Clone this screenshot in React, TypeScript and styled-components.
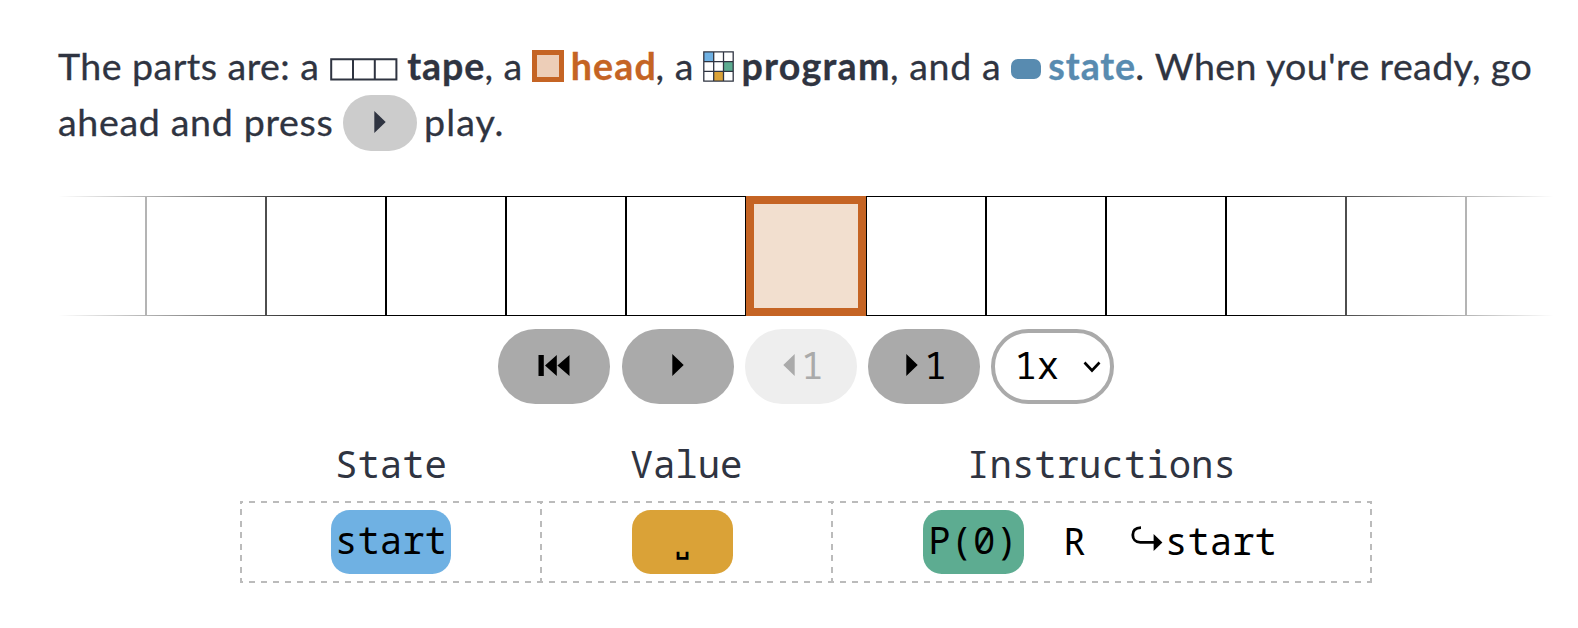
import React from 'react';
import styled, { createGlobalStyle } from 'styled-components';

const ink = '#2f3441';
const orange = '#c56424';
const sans = 'Lato, "Open Sans", sans-serif';
const mono = '"Noto Sans Mono", "Liberation Mono", monospace';

const GlobalStyle = createGlobalStyle`
  * { box-sizing: border-box; }
  body { margin: 0; background: #fff; }
`;

const Page = styled.main`
  width: 1578px;
  height: 628px;
  padding: 37px 24px 0 58px;
  overflow: hidden;
  background: #fff;
  color: ${ink};
`;

const Intro = styled.section`
  font-family: ${sans};
  font-size: 37.6px;
`;

const Line = styled.div`
  display: flex;
  height: 56px;
  line-height: 57px;
  white-space: pre;
`;

const Text = styled.span<{ $w: number; $ls?: number }>`
  flex: none;
  width: ${p => p.$w}px;
  letter-spacing: ${p => p.$ls ?? 0.5}px;
  -webkit-text-stroke: 0.3px currentColor;
`;

const Term = styled(Text)<{ $color?: string }>`
  font-weight: 700;
  color: ${p => p.$color ?? ink};
`;

const Glyph = styled.svg<{ $top: number; $gap?: number }>`
  flex: none;
  display: block;
  margin-top: ${p => p.$top}px;
  margin-right: ${p => p.$gap ?? 0}px;
`;

const HeadIcon = styled.span`
  flex: none;
  width: 32px;
  height: 32px;
  margin: 13px 6.8px 0 0;
  border: 5px solid ${orange};
  background: #edceb8;
`;

const StateIcon = styled.span`
  flex: none;
  width: 30px;
  height: 20px;
  margin: 22px 7.4px 0 0;
  border-radius: 7px;
  background: #588bb0;
`;

const InlinePlay = styled.span`
  flex: none;
  display: flex;
  align-items: center;
  justify-content: center;
  width: 74px;
  height: 56px;
  margin: 2px 7px 0 0;
  padding-bottom: 2px;
  border-radius: 28px;
  background: #ccc;
  color: ${ink};
`;

const Tape = styled.div`
  display: flex;
  justify-content: center;
  width: 1496px;
  height: 120px;
  margin-top: 47px;
  overflow: hidden;
  mask-image: linear-gradient(to right, transparent, #000 20%, #000 80%, transparent);
`;

const Cell = styled.div<{ $head?: boolean }>`
  flex: none;
  width: 120px;
  height: 120px;
  border: ${p => (p.$head ? `8px solid ${orange}` : '1px solid #000')};
  background: ${p => (p.$head ? '#f2dfcf' : 'transparent')};
`;

const Controls = styled.div`
  display: flex;
  gap: 11.25px;
  margin: 13px 0 0 440.4px;
  font-family: ${mono};
  font-size: 37.33px;
`;

const Button = styled.button`
  display: flex;
  align-items: center;
  justify-content: center;
  width: 112px;
  height: 75px;
  padding: 0 0 3px;
  border: 0;
  border-radius: 37.33px;
  background: #aaa;
  color: #000;
  font: inherit;
  line-height: 70px;
  &:disabled {
    background: #eee;
    color: #aaa;
  }
`;

const IconSlot = styled.span`
  display: flex;
  align-items: center;
  justify-content: center;
  width: 22.4px;
  padding-right: 1px;
`;

const Speed = styled.div`
  display: flex;
  align-items: center;
  gap: 24px;
  width: 123px;
  height: 75px;
  padding: 0 0 3px 19px;
  border: 4px solid #aaa;
  border-radius: 37.33px;
  color: #000;
  line-height: 60px;

  svg {
    margin-top: 4px;
  }
`;

const Program = styled.table`
  width: 1130px;
  margin: 21px 0 0 183px;
  border-spacing: 0;
  table-layout: fixed;
  font-family: ${mono};
  font-size: 37.33px;
`;

const HeadCell = styled.th`
  height: 77px;
  padding: 0;
  font-weight: 400;
  line-height: 77px;
  vertical-align: top;
`;

const dashes = (angle: number, period: number) =>
  `repeating-linear-gradient(${angle}deg, #bbb 0 3px, transparent 3px ${period - 3}px, #bbb ${period - 3}px ${period}px)`;

const BodyCell = styled.td<{ $period: number }>`
  position: relative;
  height: 80px;
  padding: 0;

  &::before {
    content: '';
    position: absolute;
    inset: -1px;
    background:
      ${p => dashes(90, p.$period)} top / 100% 2px no-repeat,
      ${p => dashes(90, p.$period)} bottom / 100% 2px no-repeat,
      ${dashes(180, 11.43)} left / 2px 100% no-repeat,
      ${dashes(180, 11.43)} right / 2px 100% no-repeat;
  }
`;

const Items = styled.div<{ $shift?: number }>`
  position: relative;
  left: ${p => p.$shift ?? 0}px;
  display: flex;
  align-items: center;
  justify-content: center;
  color: #000;
`;

const Pill = styled.span<{ $bg: string; $w: number }>`
  display: flex;
  justify-content: center;
  width: ${p => p.$w}px;
  height: 64px;
  border-radius: 18.67px;
  background: ${p => p.$bg};
  line-height: 60px;
`;

const Blank = styled.span`
  font-size: 24px;
  font-weight: 600;
  line-height: 70px;
`;

const Op = styled.span`
  width: 101px;
  padding-left: 1px;
  text-align: center;
  line-height: 60px;
  margin-bottom: 3px;
`;

const Goto = styled.span`
  display: flex;
  align-items: center;
  width: 157px;
  padding-left: 6.5px;
  line-height: 60px;
  margin-bottom: 3px;

  svg {
    margin-bottom: 3px;
  }
`;

const Play = () => (
  <svg width="12" height="22" viewBox="0 0 12 22">
    <path d="M0.3 0v22L11.7 11z" fill="currentColor" />
  </svg>
);

const Back = () => (
  <svg width="12" height="22" viewBox="0 0 12 22">
    <path d="M11.7 0v22L0.3 11z" fill="currentColor" />
  </svg>
);

const Rewind = () => (
  <svg width="32" height="21" viewBox="0 0 32 21">
    <path d="M0.5 0h5.3v21h-5.3zM18.8 0v21L7 10.5zM31.5 0v21L19.4 10.5z" fill="currentColor" />
  </svg>
);

const cells = Array.from({ length: 13 }, (_, i) => i);

export default function App() {
  return (
    <Page>
      <GlobalStyle />
      <Intro>
        <Line>
          <Text $w={272} $ls={0.45}>The parts are: a</Text>
          <Glyph $top={20.5} $gap={9.2} width="68" height="23" viewBox="0 0 68 23">
            <path d="M1.2 1.2h65.2v20.4H1.2zM23 1v21M44.8 1v21" fill="none" stroke={ink} strokeWidth="2" />
          </Glyph>
          <Term $w={77.2} $ls={0.85}>tape</Term>
          <Text $w={47.6}>, a</Text>
          <HeadIcon />
          <Term $w={84.8} $ls={1.1} $color={orange}>head</Term>
          <Text $w={47.4}>, a</Text>
          <Glyph $top={13.5} $gap={7.5} width="31" height="31" viewBox="0 0 31 31">
            <path d="M1 1h9.7v9.7H1z" fill="#6fb1e3" />
            <path d="M20.5 10.7h9.5v9.6h-9.5z" fill="#5dac91" />
            <path d="M10.7 20.3h9.8V30h-9.8z" fill="#daa237" />
            <path d="M.8.8h29.4v29.4H.8zM10.7 1v29M20.5 1v29M1 10.7h29M1 20.3h29" fill="none" stroke={ink} strokeWidth="1.3" />
          </Glyph>
          <Term $w={148.5} $ls={1.25}>program</Term>
          <Text $w={121} $ls={0.6}>, and a</Text>
          <StateIcon />
          <Term $w={87} $ls={0.9} $color="#588bb0">state</Term>
          <Text $w={19.5}>.</Text>
          <Text $w={380} $ls={0.37}>When you're ready, go</Text>
        </Line>
        <Line>
          <Text $w={285} $ls={0.66}>ahead and press</Text>
          <InlinePlay><Play /></InlinePlay>
          <Text $w={90} $ls={1.1}>play.</Text>
        </Line>
      </Intro>

      <Tape>
        {cells.map(i => <Cell key={i} $head={i === 6} />)}
      </Tape>

      <Controls>
        <Button><Rewind /></Button>
        <Button><Play /></Button>
        <Button disabled><IconSlot><Back /></IconSlot>1</Button>
        <Button><IconSlot><Play /></IconSlot>1</Button>
        <Speed>
          1x
          <svg width="18" height="12" viewBox="0 0 18 12">
            <path d="M1.5 1.5L9 9.5l7.5-8" fill="none" stroke="#000" strokeWidth="2.6" />
          </svg>
        </Speed>
      </Controls>

      <Program>
        <colgroup>
          <col width="300" />
          <col width="291" />
          <col width="539" />
        </colgroup>
        <thead>
          <tr>
            <HeadCell>State</HeadCell>
            <HeadCell>Value</HeadCell>
            <HeadCell>Instructions</HeadCell>
          </tr>
        </thead>
        <tbody>
          <tr>
            <BodyCell $period={12}><Items><Pill $bg="#6fb1e3" $w={120}>start</Pill></Items></BodyCell>
            <BodyCell $period={12.125}><Items $shift={-4}><Pill $bg="#daa237" $w={101}><Blank>␣</Blank></Pill></Items></BodyCell>
            <BodyCell $period={11.978}>
              <Items $shift={0.5}>
                <Pill $bg="#5dac91" $w={101}>P(0)</Pill>
                <Op>R</Op>
                <Goto>
                  <svg width="34" height="26" viewBox="0 0 34 26">
                    <path d="M10 1.7C4 1.7 1.8 5 1.8 9s2.5 7.3 7.5 7.3h14.5" fill="none" stroke="#000" strokeWidth="2.8" />
                    <path d="M22.6 8v17L31.4 16.4z" fill="#000" />
                  </svg>
                  start
                </Goto>
              </Items>
            </BodyCell>
          </tr>
        </tbody>
      </Program>
    </Page>
  );
}
